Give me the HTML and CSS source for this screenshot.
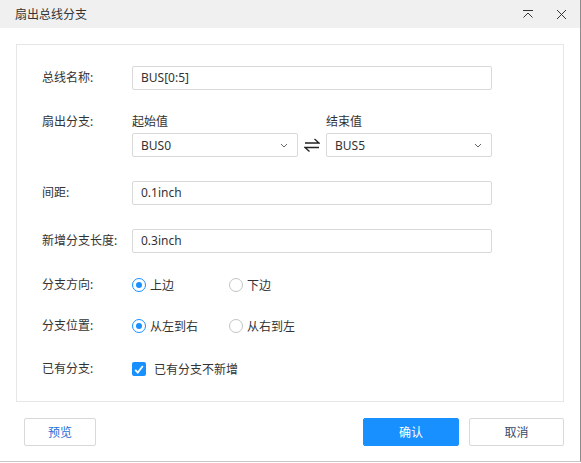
FILE: index.html
```html
<!DOCTYPE html>
<html lang="zh">
<head>
<meta charset="utf-8">
<link rel="stylesheet" href="styles.css">
</head>
<body>
<div class="window">
  <div class="titlebar">
    <span class="title">扇出总线分支</span>
    <div class="title-icons">
      <svg class="ticon" width="12" height="10" viewBox="0 0 12 10"><path d="M1 1.5H11M1.5 8.5L6 4L10.5 8.5" fill="none" stroke="#333" stroke-width="1"/></svg>
      <svg class="ticon" width="11" height="11" viewBox="0 0 11 11"><path d="M1 1L10 10M10 1L1 10" fill="none" stroke="#333" stroke-width="1"/></svg>
    </div>
  </div>
  <div class="content">
    <div class="panel">
      <div class="row r1">
        <span class="label">总线名称:</span>
        <div class="input wide">BUS[0:5]</div>
      </div>
      <div class="row r2 top">
        <span class="label">扇出分支:</span>
        <div class="range">
          <div class="range-col">
            <span class="sublabel">起始值</span>
            <div class="select"><span>BUS0</span><svg width="8" height="5" viewBox="0 0 8 5"><path d="M1 1L4 4L7 1" fill="none" stroke="#666" stroke-width="1"/></svg></div>
          </div>
          <svg class="swap" width="16" height="14" viewBox="0 0 16 14"><path d="M1 5H15L10.5 1M15 9.5H1L5.5 13.5" fill="none" stroke="#222" stroke-width="1.3"/></svg>
          <div class="range-col">
            <span class="sublabel">结束值</span>
            <div class="select"><span>BUS5</span><svg width="8" height="5" viewBox="0 0 8 5"><path d="M1 1L4 4L7 1" fill="none" stroke="#666" stroke-width="1"/></svg></div>
          </div>
        </div>
      </div>
      <div class="row r3">
        <span class="label">间距:</span>
        <div class="input wide">0.1inch</div>
      </div>
      <div class="row r4">
        <span class="label">新增分支长度:</span>
        <div class="input wide">0.3inch</div>
      </div>
      <div class="row r5">
        <span class="label">分支方向:</span>
        <div class="options">
          <label class="opt"><span class="radio on"></span><span>上边</span></label>
          <label class="opt"><span class="radio"></span><span>下边</span></label>
        </div>
      </div>
      <div class="row r6">
        <span class="label">分支位置:</span>
        <div class="options">
          <label class="opt"><span class="radio on"></span><span>从左到右</span></label>
          <label class="opt"><span class="radio"></span><span>从右到左</span></label>
        </div>
      </div>
      <div class="row r7">
        <span class="label">已有分支:</span>
        <label class="opt chk"><span class="checkbox"><svg width="10" height="9" viewBox="0 0 10 9"><path d="M1.2 4.8L3.8 7.5L8.8 1" fill="none" stroke="#fff" stroke-width="1.8"/></svg></span><span>已有分支不新增</span></label>
      </div>
    </div>
  </div>
  <div class="footer">
    <button class="btn preview">预览</button>
    <div class="right-btns">
      <button class="btn primary">确认</button>
      <button class="btn cancel">取消</button>
    </div>
  </div>
</div>
</body>
</html>
```
FILE: styles.css
```css
html, body {
  margin: 0;
  padding: 0;
  background: #ffffff;
}
body {
  font-family: "Noto Sans", "Noto Sans CJK SC", sans-serif;
  font-size: 12px;
  color: #333;
}
.window {
  width: 580px;
  height: 461px;
  border-right: 1px solid #8c8c8c;
  border-bottom: 1px solid #c8c8c8;
  background: #fff;
  display: flex;
  flex-direction: column;
}
.titlebar {
  height: 28px;
  background: #f0f0f0;
  display: flex;
  align-items: center;
  justify-content: space-between;
  padding: 0 13px 0 15px;
  flex-shrink: 0;
}
.title {
  font-size: 12px;
  color: #333;
}
.title-icons {
  display: flex;
  align-items: center;
  gap: 22px;
}
.ticon { display: block; }
.content {
  padding: 16px 16px 0 16px;
}
.panel {
  height: 358px;
  border: 1px solid #e6e6e6;
  padding: 21px 0 0 25px;
  box-sizing: border-box;
}
.row {
  display: flex;
  align-items: center;
}
.row.top { align-items: flex-start; }
.label {
  width: 90px;
  flex-shrink: 0;
  line-height: 16px;
  color: #333;
}
.input {
  height: 22px;
  border: 1px solid #d9d9d9;
  border-radius: 2px;
  box-sizing: content-box;
  padding: 0 8px;
  line-height: 22px;
  color: #333;
}
.input.wide { width: 342px; }
.r2 { margin-top: 24px; }
.r3 { margin-top: 24px; }
.r4 { margin-top: 24px; }
.r5 { margin-top: 22px; }
.r6 { margin-top: 21px; }
.r7 { margin-top: 23px; }
.range {
  display: flex;
  align-items: flex-end;
}
.range-col {
  display: flex;
  flex-direction: column;
  gap: 3px;
}
.sublabel {
  line-height: 16px;
}
.select {
  width: 166px;
  border: 1px solid #d9d9d9;
  border-radius: 2px;
  display: flex;
  align-items: center;
  justify-content: space-between;
  padding: 0 9px 0 8px;
  box-sizing: border-box;
  height: 24px;
}
.swap {
  margin: 0 6px 5px 6px;
}
.options {
  display: flex;
  align-items: center;
}
.opt {
  display: flex;
  align-items: center;
  height: 20px;
  gap: 4px;
}
.options .opt:first-child { width: 97px; }
.radio {
  width: 14px;
  height: 14px;
  border: 1px solid #c4c4c4;
  border-radius: 50%;
  box-sizing: border-box;
  display: flex;
  align-items: center;
  justify-content: center;
}
.radio.on { border-color: #1890ff; }
.radio.on::after {
  content: "";
  width: 6px;
  height: 6px;
  border-radius: 50%;
  background: #1890ff;
}
.chk { gap: 8px; }
.checkbox {
  width: 14px;
  height: 14px;
  background: #1890ff;
  border-radius: 2px;
  display: flex;
  align-items: center;
  justify-content: center;
}
.footer {
  display: flex;
  justify-content: space-between;
  align-items: center;
  padding: 16px 16px 0 24px;
}
.right-btns {
  display: flex;
  gap: 10px;
}
.btn {
  height: 28px;
  border: 1px solid #d9d9d9;
  border-radius: 2px;
  background: #fff;
  font-family: "Noto Sans", "Noto Sans CJK SC", sans-serif;
  font-size: 12px;
  color: #333;
  padding: 0;
  cursor: pointer;
}
.btn.preview { width: 72px; color: #1f6fd6; }
.btn.primary { width: 96px; background: #1890ff; border-color: #1890ff; color: #fff; }
.btn.cancel { width: 95px; color: #3a4a6a; }
```
